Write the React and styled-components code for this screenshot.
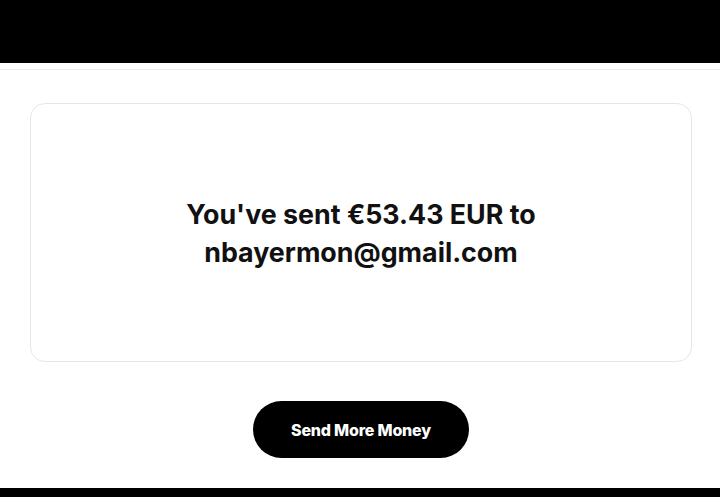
import React from "react";
import styled, { createGlobalStyle } from "styled-components";

const Global = createGlobalStyle`
  html, body { margin: 0; padding: 0; background: #fff; }
  body { font-family: "Inter", "Liberation Sans", sans-serif; overflow: hidden; }
`;

const Page = styled.div`
  width: 720px;
  height: 497px;
  display: flex;
  flex-direction: column;
  background: #fff;
`;

const TopBar = styled.header`
  height: 63px;
  flex: none;
  background: #000;
`;

const Divider = styled.div`
  margin-top: 6px;
  height: 1px;
  background: #ececec;
  flex: none;
`;

const Main = styled.main`
  flex: 1;
  display: flex;
  flex-direction: column;
  align-items: center;
  padding: 33px 28px 0 30px;
`;

const Card = styled.section`
  align-self: stretch;
  height: 257px;
  border: 1px solid #e6e6e6;
  border-radius: 15px;
  display: flex;
  align-items: center;
  justify-content: center;
  text-align: center;
`;

const Message = styled.h1`
  margin: 0;
  font-family: "Inter", "Liberation Sans", sans-serif;
  font-weight: 700;
  font-size: 26.8px;
  line-height: 38px;
  letter-spacing: 0;
  color: #111;
`;

const Button = styled.button`
  margin-top: 39px;
  width: 216px;
  height: 57px;
  border: none;
  border-radius: 29px;
  background: #000;
  color: #fff;
  font-family: "Inter", "Liberation Sans", sans-serif;
  font-weight: 800;
  font-size: 16px;
  letter-spacing: -0.2px;
  cursor: pointer;
`;

const BottomBar = styled.footer`
  height: 9px;
  flex: none;
  background: #000;
`;

export default function App() {
  return (
    <>
      <Global />
      <Page>
        <TopBar />
        <Divider />
        <Main>
          <Card>
            <Message>
              You've sent €53.43 EUR to
              <br />
              nbayermon@gmail.com
            </Message>
          </Card>
          <Button>Send More Money</Button>
        </Main>
        <BottomBar />
      </Page>
    </>
  );
}
